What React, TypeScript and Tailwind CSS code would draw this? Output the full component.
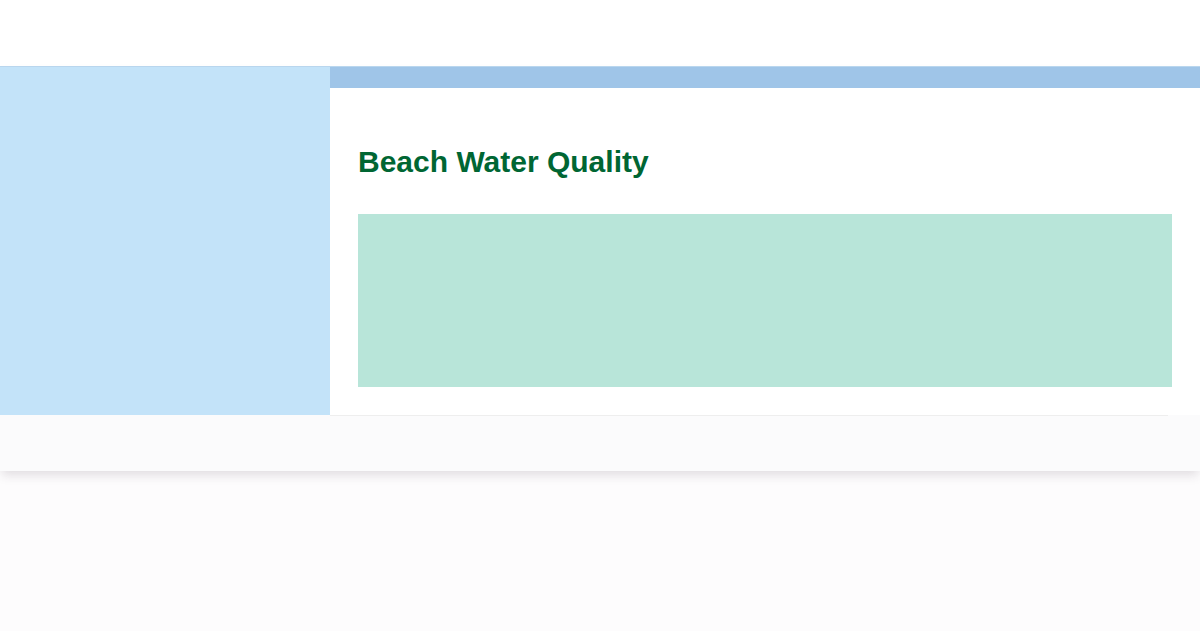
import React from 'react';

const App: React.FC = () => {
  return (
    <div className="min-h-screen bg-[#fdfcfd] font-['Liberation_Sans',Arial,sans-serif]">
      <div className="h-[66px] bg-white" />
      <div className="bg-[#fbfbfc] shadow-[0_6px_10px_-2px_rgba(60,40,60,0.15)]">
        <div className="flex h-[349px] border-t border-[#b9d6ee]">
          <aside className="w-[330px] bg-[#c3e3f9]" />
          <main className="flex-1 bg-white">
            <div className="h-[21px] bg-[#9fc5e8]" />
            <div className="px-[28px] pt-[56px]">
              <h1 className="text-[30px] leading-[36px] font-bold text-[#006633] mb-[34px]">
                Beach Water Quality
              </h1>
              <div className="h-[173px] bg-[#b8e5d9]" />
            </div>
          </main>
        </div>
        <div className="flex h-[56px]">
          <div className="w-[330px]" />
          <div className="flex-1 mr-[32px] border-t border-[#eeeeee]" />
        </div>
      </div>
    </div>
  );
};

export default App;
